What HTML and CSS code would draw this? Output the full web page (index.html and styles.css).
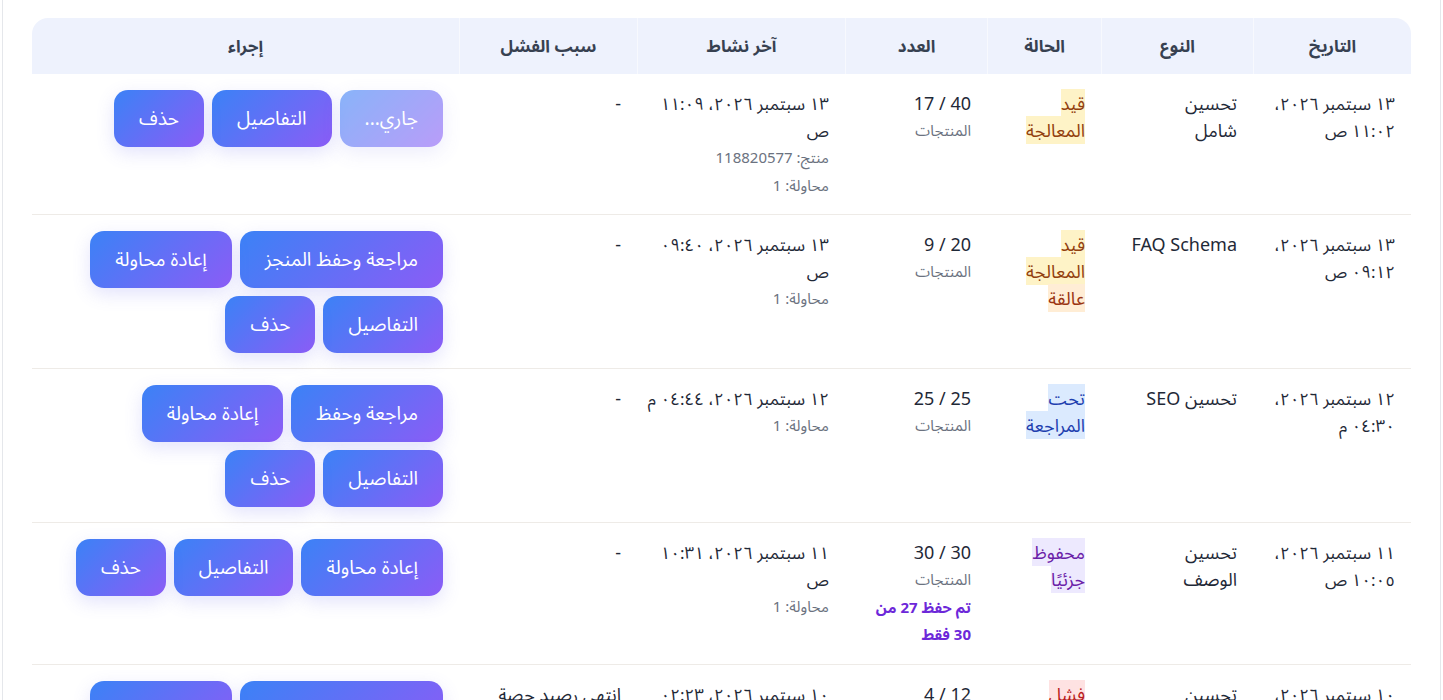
FILE: index.html
```html
<!DOCTYPE html>
<html lang="ar" dir="rtl">
<head>
<meta charset="utf-8">
<title>سجل المهام</title>
<link rel="stylesheet" href="styles.css">
</head>
<body>
<div class="card">
  <table class="jobs">
    <colgroup>
      <col class="c-date"><col class="c-type"><col class="c-status"><col class="c-count"><col class="c-last"><col class="c-reason"><col class="c-actions">
    </colgroup>
    <thead>
      <tr>
        <th>التاريخ</th>
        <th>النوع</th>
        <th>الحالة</th>
        <th>العدد</th>
        <th>آخر نشاط</th>
        <th>سبب الفشل</th>
        <th>إجراء</th>
      </tr>
    </thead>
    <tbody>
      <tr>
        <td class="date">١٣ سبتمبر ٢٠٢٦، ١١:٠٢ ص</td>
        <td>تحسين<br>شامل</td>
        <td><span class="badge b-processing">قيد المعالجة</span></td>
        <td><div>40 / 17</div><div class="muted">المنتجات</div></td>
        <td><div class="date">١٣ سبتمبر ٢٠٢٦، ١١:٠٩ ص</div><div class="muted">منتج: 118820577</div><div class="muted">محاولة: 1</div></td>
        <td>-</td>
        <td><div class="actions"><button class="btn" disabled>جاري...</button><button class="btn">التفاصيل</button><button class="btn">حذف</button></div></td>
      </tr>
      <tr>
        <td class="date">١٣ سبتمبر ٢٠٢٦، ٠٩:١٢ ص</td>
        <td>FAQ Schema</td>
        <td><span class="badge b-processing">قيد المعالجة</span> <span class="badge b-stuck">عالقة</span></td>
        <td><div>20 / 9</div><div class="muted">المنتجات</div></td>
        <td><div class="date">١٣ سبتمبر ٢٠٢٦، ٠٩:٤٠ ص</div><div class="muted">محاولة: 1</div></td>
        <td>-</td>
        <td><div class="actions"><button class="btn">مراجعة وحفظ المنجز</button><button class="btn">إعادة محاولة</button><button class="btn">التفاصيل</button><button class="btn">حذف</button></div></td>
      </tr>
      <tr>
        <td class="date">١٢ سبتمبر ٢٠٢٦، ٠٤:٣٠ م</td>
        <td>تحسين SEO</td>
        <td><span class="badge b-review">تحت المراجعة</span></td>
        <td><div>25 / 25</div><div class="muted">المنتجات</div></td>
        <td><div class="date one-line">١٢ سبتمبر ٢٠٢٦، ٠٤:٤٤ م</div><div class="muted">محاولة: 1</div></td>
        <td>-</td>
        <td><div class="actions"><button class="btn">مراجعة وحفظ</button><button class="btn">إعادة محاولة</button><button class="btn">التفاصيل</button><button class="btn">حذف</button></div></td>
      </tr>
      <tr>
        <td class="date">١١ سبتمبر ٢٠٢٦، ١٠:٠٥ ص</td>
        <td>تحسين<br>الوصف</td>
        <td><span class="badge b-partial">محفوظ جزئيًا</span></td>
        <td><div>30 / 30</div><div class="muted">المنتجات</div><div class="saved-note">تم حفظ 27 من 30 فقط</div></td>
        <td><div class="date">١١ سبتمبر ٢٠٢٦، ١٠:٣١ ص</div><div class="muted">محاولة: 1</div></td>
        <td>-</td>
        <td><div class="actions"><button class="btn">إعادة محاولة</button><button class="btn">التفاصيل</button><button class="btn">حذف</button></div></td>
      </tr>
      <tr>
        <td class="date">١٠ سبتمبر ٢٠٢٦، ٠٢:١٥ م</td>
        <td>تحسين<br>الوصف</td>
        <td><span class="badge b-failed">فشل</span></td>
        <td><div>12 / 4</div><div class="muted">المنتجات</div></td>
        <td><div class="date">١٠ سبتمبر ٢٠٢٦، ٠٢:٢٣ م</div><div class="muted">محاولة: 1</div></td>
        <td>انتهى رصيد حصة الاستخدام الشهرية</td>
        <td><div class="actions"><button class="btn">مراجعة وحفظ المنجز</button><button class="btn">إعادة محاولة</button><button class="btn">التفاصيل</button><button class="btn">حذف</button></div></td>
      </tr>
    </tbody>
  </table>
</div>
</body>
</html>
```
FILE: styles.css
```css
html, body {
  margin: 0;
  padding: 0;
  background: #ffffff;
  height: 100%;
  overflow: hidden;
}

body {
  font-family: "Noto Sans", "Noto Sans Arabic", "DejaVu Sans", sans-serif;
  color: #1f2937;
  font-size: 18px;
}

.card {
  margin: 0 2px;
  border-left: 1px solid #e5e7eb;
  border-right: 1px solid #e5e7eb;
  padding: 18px 29px 0 29px;
  min-height: 100%;
  box-sizing: border-box;
}

.jobs {
  width: 100%;
  table-layout: fixed;
  border-collapse: separate;
  border-spacing: 0;
}

.c-date { width: 158px; }
.c-type { width: 152px; }
.c-status { width: 114px; }
.c-count { width: 142px; }
.c-last { width: 208px; }
.c-reason { width: 178px; }
.c-actions { width: 427px; }

.jobs th {
  background: #eef2fd;
  color: #374151;
  font-weight: 700;
  font-size: 17px;
  line-height: 24px;
  padding: 16px;
  text-align: center;
  border-left: 1px solid rgba(255, 255, 255, 0.55);
}

.jobs th:first-child {
  border-top-right-radius: 16px;
}

.jobs th:last-child {
  border-top-left-radius: 16px;
  border-left: none;
}

.jobs td {
  vertical-align: top;
  text-align: right;
  padding: 16px 16px 15px;
  line-height: 27px;
  border-bottom: 1px solid #eeebe7;
  color: #1f2937;
}

.jobs td.date,
.jobs .date {
  font-size: 17px;
}

.one-line {
  white-space: nowrap;
}

.muted {
  color: #6b7280;
  font-size: 15px;
  line-height: 27.5px;
}

.saved-note {
  color: #6d28d9;
  font-weight: 700;
  font-size: 15px;
  line-height: 27.5px;
}

.badge {
  line-height: 27px;
  padding: 2px 0;
}

.b-processing { background: #fef3c7; color: #92400e; }
.b-stuck { background: #ffedd5; color: #9a3412; }
.b-review { background: #dbeafe; color: #1e40af; }
.b-partial { background: #ede9fe; color: #6b21a8; }
.b-failed { background: #fee2e2; color: #b91c1c; }

.actions {
  display: flex;
  flex-wrap: wrap;
  gap: 8px;
}

.btn {
  font-family: inherit;
  font-size: 19px;
  line-height: 27px;
  padding: 15px 25px;
  border: none;
  border-radius: 14px;
  color: #ffffff;
  background: linear-gradient(135deg, #3b82f6 0%, #8b5cf6 100%);
  box-shadow: 0 6px 18px rgba(99, 102, 241, 0.18);
  white-space: nowrap;
  cursor: pointer;
}

.btn:disabled {
  opacity: 0.6;
  cursor: default;
}
```
